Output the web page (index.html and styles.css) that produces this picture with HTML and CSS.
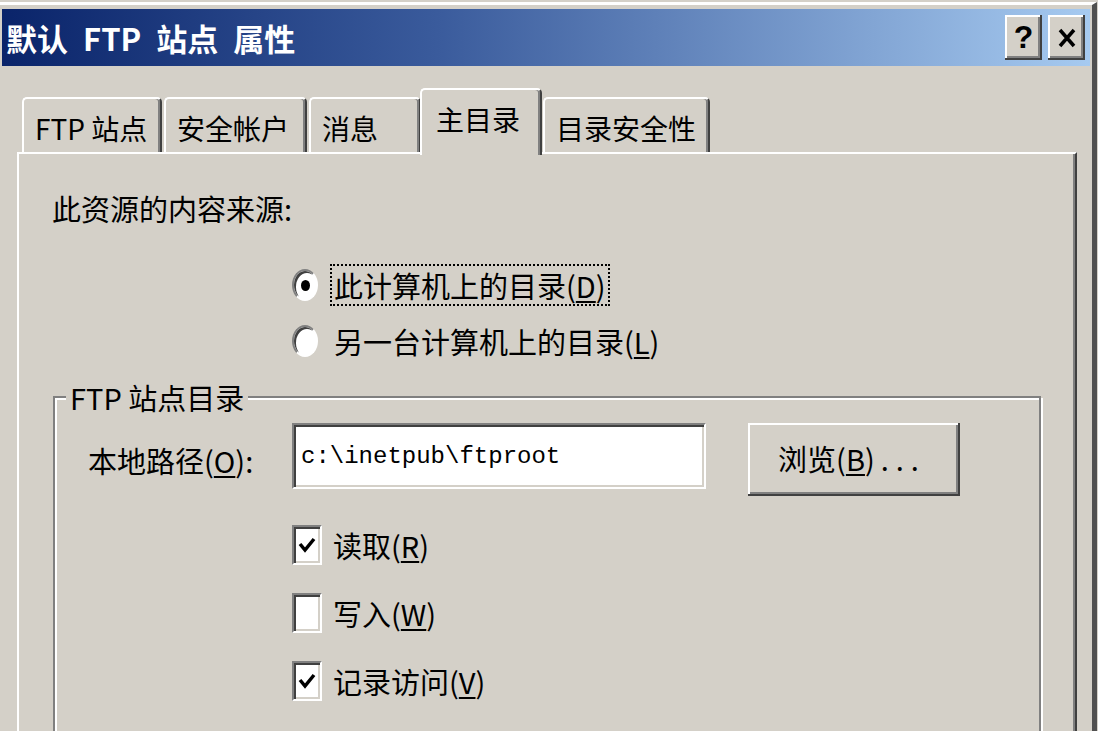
FILE: index.html
```html
<!doctype html>
<html>
    <head>
        <meta charset="utf-8" />
        <meta name="viewport" content="width=device-width, initial-scale=1" />
        <title>默认 FTP 站点 属性</title>
        <link rel="stylesheet" href="styles.css">
    </head>
    <body>
        <div class="window">
            <div class="titlebar">
                <span class="title">默认 FTP 站点 属性</span>
                <div class="caption-btns">
                    <button class="cap">?</button>
                    <button class="cap">
                        <svg width="20" height="22" viewBox="0 0 20 22">
                            <path d="M3 3 L17 19 M17 3 L3 19" stroke="#000" stroke-width="3.5" fill="none" />
                        </svg>
                    </button>
                </div>
            </div>

            <div class="tabs">
                <div class="tab tab-site">FTP 站点</div>
                <div class="tab tab-account">安全帐户</div>
                <div class="tab tab-msg">消息</div>
                <div class="tab tab-home active">主目录</div>
                <div class="tab tab-sec">目录安全性</div>
            </div>

            <div class="panel">
                <p class="source-label">此资源的内容来源:</p>

                <div class="options">
                    <label class="radio-row">
                        <span class="radio checked"></span>
                        <span class="focus">此计算机上的目录(<u>D</u>)</span>
                    </label>
                    <label class="radio-row">
                        <span class="radio"></span>
                        <span class="plain">另一台计算机上的目录(<u>L</u>)</span>
                    </label>
                </div>

                <fieldset class="group">
                    <legend>FTP 站点目录</legend>
                    <div class="path-row">
                        <span class="path-label">本地路径(<u>O</u>):</span>
                        <div class="textbox">c:\inetpub\ftproot</div>
                        <button class="btn">浏览(<u>B</u>)<span class="dots">...</span></button>
                    </div>

                    <div class="checks">
                        <label class="check-row">
                            <span class="checkbox">
                                <svg width="20" height="20" viewBox="0 0 20 20"><path d="M3 9 L8 15 L17 4" stroke="#000" stroke-width="3.5" fill="none" /></svg>
                            </span>
                            <span>读取(<u>R</u>)</span>
                        </label>
                        <label class="check-row">
                            <span class="checkbox"></span>
                            <span>写入(<u>W</u>)</span>
                        </label>
                        <label class="check-row">
                            <span class="checkbox">
                                <svg width="20" height="20" viewBox="0 0 20 20"><path d="M3 9 L8 15 L17 4" stroke="#000" stroke-width="3.5" fill="none" /></svg>
                            </span>
                            <span>记录访问(<u>V</u>)</span>
                        </label>
                    </div>
                </fieldset>
            </div>
        </div>
    </body>
</html>
```

FILE: styles.css
```css
html {
    font-family: "Noto Sans CJK SC", sans-serif;
}

body {
    margin: 0;
    padding-top: 2px;
    background: #d4d0c8;
    color: #000;
    overflow: hidden;
}

.window {
    width: 1097px;
    height: 729px;
    overflow: hidden;
    box-sizing: border-box;
    border-top: 3px solid #fff;
    border-right: 5px solid #505050;
    padding-top: 4px;
}

/* title bar */

.titlebar {
    height: 57px;
    margin: 0 2px;
    padding: 0 5px 0 4px;
    display: flex;
    align-items: center;
    justify-content: space-between;
    background: linear-gradient(to right, #0a246a, #3a5b9c 40%, #a6caf0);
}

.title {
    color: #fff;
    font-weight: 700;
    font-size: 31px;
    line-height: 1;
    word-spacing: 8px;
}

.caption-btns {
    display: flex;
    gap: 6px;
}

.cap {
    width: 37px;
    height: 45px;
    padding: 0;
    border: 0;
    background: #d4d0c8;
    box-shadow: inset -2px -2px #404040, inset 2px 2px #fff, inset -4px -4px #808080;
    display: flex;
    align-items: center;
    justify-content: center;
    font: 700 32px "Liberation Sans", sans-serif;
    color: #000;
}

/* tabs */

.tabs {
    position: relative;
    z-index: 1;
    display: flex;
    align-items: flex-end;
    gap: 2px;
    height: 64px;
    margin: 22px 0 0 22px;
}

.tab {
    height: 55px;
    box-sizing: border-box;
    border: 2px solid #fff;
    border-bottom: 0;
    border-right-color: #404040;
    border-radius: 5px 5px 0 0;
    box-shadow: inset -2px 0 #808080;
    background: #d4d0c8;
    display: flex;
    align-items: center;
    padding: 4px 0 0 11px;
    font-size: 28px;
    white-space: nowrap;
}

.tab-site { width: 140px; }
.tab-account { width: 143px; }
.tab-msg { width: 112px; }
.tab-sec { width: 167px; margin-left: -1px; }

.tab.active {
    width: 122px;
    height: 67px;
    margin-left: -3px;
    margin-bottom: -3px;
    padding: 0 0 8px 14px;
}

/* page */

.panel {
    width: 1060px;
    height: 620px;
    margin-left: 17px;
    box-sizing: border-box;
    border-top: 2px solid #fff;
    border-left: 2px solid #fff;
    border-right: 2px solid #404040;
    box-shadow: inset -2px 0 #808080;
    padding: 0 32px 0 34px;
    font-size: 29px;
}

.source-label {
    margin: 37px 0 0 -1px;
    line-height: 34px;
}

.options {
    margin: 39px 0 0 239px;
    display: flex;
    flex-direction: column;
    gap: 14px;
}

.radio-row {
    display: flex;
    align-items: center;
    gap: 12px;
    height: 42px;
}

.radio {
    position: relative;
    width: 26px;
    height: 32px;
    box-sizing: border-box;
    border: 2px solid;
    border-color: #808080 #fff #fff #808080;
    border-radius: 50%;
    background: #fff;
    box-shadow: inset 2px 2px #404040;
}

.radio.checked::after {
    content: "";
    position: absolute;
    left: 7px;
    top: 9px;
    width: 9px;
    height: 11px;
    border-radius: 50%;
    background: #000;
}

.focus {
    border: 2px dotted #000;
    padding: 0 2px;
    line-height: 38px;
}

.plain {
    padding-left: 4px;
}

u {
    text-underline-offset: 3px;
}

/* group box */

.group {
    margin: 17px 0 0;
    padding: 8px 0 0 33px;
    width: 988px;
    height: 420px;
    box-sizing: border-box;
    border: 2px solid #808080;
    box-shadow: inset 2px 2px #fff, 2px 2px #fff;
    min-width: 0;
}

.group legend {
    margin-left: -22px;
    padding: 0 4px;
    line-height: 36px;
    background: #d4d0c8;
}

.path-row {
    display: flex;
    align-items: center;
    height: 73px;
}

.path-label {
    width: 204px;
    flex: none;
}

.textbox {
    align-self: flex-start;
    width: 414px;
    height: 66px;
    box-sizing: border-box;
    border: 2px solid;
    border-color: #808080 #fff #fff #808080;
    box-shadow: inset 2px 2px #404040, inset -2px -2px #d4d0c8;
    background: #fff;
    padding-left: 7px;
    display: flex;
    align-items: center;
    font: 24px "Liberation Mono", monospace;
}

.btn {
    margin-left: 42px;
    width: 212px;
    height: 73px;
    border: 0;
    background: #d4d0c8;
    box-shadow: inset -2px -2px #404040, inset 2px 2px #fff, inset -4px -4px #808080;
    font: 29px "Noto Sans CJK SC", sans-serif;
    color: #000;
    padding: 0 4px 4px 0;
}

.btn .dots {
    margin-left: 6px;
    letter-spacing: 7px;
}

.checks {
    margin: 28px 0 0 204px;
    display: flex;
    flex-direction: column;
    gap: 26px;
}

.check-row {
    display: flex;
    align-items: center;
    gap: 11px;
    height: 42px;
}

.checkbox {
    width: 30px;
    height: 40px;
    box-sizing: border-box;
    border: 2px solid;
    border-color: #808080 #fff #fff #808080;
    box-shadow: inset 2px 2px #404040, inset -2px -2px #d4d0c8;
    background: #fff;
    display: flex;
    align-items: center;
    justify-content: center;
}
```
